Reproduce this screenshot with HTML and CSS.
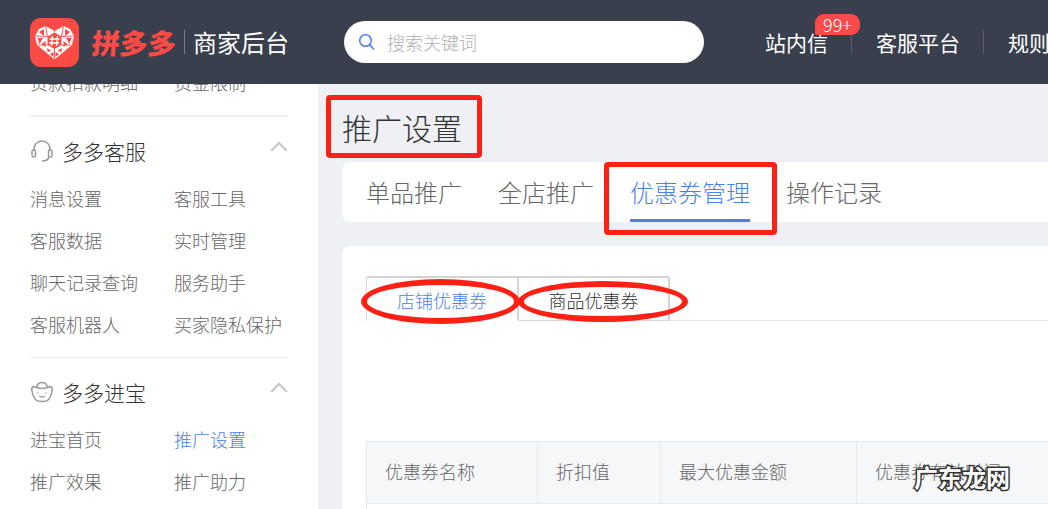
FILE: index.html
```html
<!DOCTYPE html>
<html lang="zh-CN">
<head>
  <meta charset="UTF-8" />
  <title>推广设置</title>
  <link rel="stylesheet" href="styles.css">
</head>
<body>

  <!-- Top bar -->
  <header class="topbar">
    <div class="logo">
      <svg class="logo-mark" width="49" height="49" viewBox="0 0 49 49">
        <rect width="49" height="49" rx="11" fill="#fc4a45"/>
        <path d="M24.500 41.500 L7 27 L5 18 L9 11 L15.500 8 L24.500 13 L33.500 8 L40 11 L44 18 L42 27 Z" fill="#fff"/>
        <path d="M24.500 14.500 L31.500 18.500 L31.500 27 L24.500 31 L17.500 27 L17.500 18.500 Z" fill="#fc4a45"/>
        <path d="M22.500 18 L21.500 28 M27.500 18 L26.500 28 M19.500 21 L29.500 21 M19 25 L29 25" stroke="#fff" stroke-width="1.400"/>
        <g fill="#fc4a45">
          <path d="M9 14 L14 11 L14 18 Z"/>
          <path d="M40 14 L35 11 L35 18 Z"/>
          <path d="M7.500 20 L13 20 L9.500 26 Z"/>
          <path d="M41.500 20 L36 20 L39.500 26 Z"/>
          <path d="M15.500 23 L11.500 26 L15.500 29 Z"/>
          <path d="M33.500 23 L37.500 26 L33.500 29 Z"/>
          <path d="M17 30 L21.500 33 L17.500 34 Z"/>
          <path d="M32 30 L27.500 33 L31.500 34 Z"/>
          <path d="M23.500 34 L23.500 39 L20 36 Z"/>
          <path d="M25.500 34 L25.500 39 L29 36 Z"/>
        </g>
        <path d="M5.500 18 L17.500 18.500 M31.500 18.500 L43.500 18 M15.500 8 L17.500 18.500 M33.500 8 L31.500 18.500 M24.500 13 L24.500 14.500 M17.500 27 L8 27 M31.500 27 L41 27 M24.500 31 L24.500 41" stroke="#fc4a45" stroke-width="0.900"/>
      </svg>
      <span class="logo-name">拼多多</span>
      <span class="logo-title">商家后台</span>
    </div>
    <div class="search">
      <svg width="18" height="18" viewBox="0 0 18 18" fill="none" stroke="#4a7ff0" stroke-width="1.500">
        <circle cx="7.500" cy="7.500" r="5.800"/>
        <path d="M11.800 11.800 L16 16.500"/>
      </svg>
      <span>搜索关键词</span>
    </div>
    <nav class="topnav">
      <a class="topnav-item has-badge">站内信<span class="badge">99+</span></a>
      <a class="topnav-item">客服平台</a>
      <a class="topnav-item">规则</a>
    </nav>
  </header>

  <div class="page">
    <!-- Left menu -->
    <aside class="sidebar">
      <div class="menu-items clipped">
        <a>货款扣款明细</a><a>资金限制</a>
      </div>

      <section class="menu-group first">
        <h3>
          <svg width="24" height="24" viewBox="0 0 24 24" fill="none" stroke="#9a9a9a" stroke-width="1.500">
            <path d="M4 12 V10 a8 8 0 0 1 16 0 V12"/>
            <rect x="2" y="11" width="3.500" height="7" rx="1.500"/>
            <rect x="18.500" y="11" width="3.500" height="7" rx="1.500"/>
            <path d="M19 18 Q18 22 12 22"/>
          </svg>
          <span>多多客服</span>
          <i class="chevron"></i>
        </h3>
        <div class="menu-items">
          <a>消息设置</a><a>客服工具</a>
          <a>客服数据</a><a>实时管理</a>
          <a>聊天记录查询</a><a>服务助手</a>
          <a>客服机器人</a><a>买家隐私保护</a>
        </div>
      </section>

      <section class="menu-group last">
        <h3>
          <svg width="24" height="24" viewBox="0 0 24 24" fill="none" stroke="#9a9a9a" stroke-width="1.500">
            <path d="M6.500 8 Q7 2.500 12 2.500 Q17 2.500 17.500 8"/>
            <path d="M3.500 6.500 Q12 10.500 20.500 6.500 Q23 7.500 22 11 Q21 17 18 20 Q16.500 21.500 12 21.500 Q7.500 21.500 6 20 Q3 17 2 11 Q1 7.500 3.500 6.500 Z"/>
            <path d="M8 12.500 V13.500 M16 12.500 V13.500 M9 16 Q12 18 15 16"/>
          </svg>
          <span>多多进宝</span>
          <i class="chevron"></i>
        </h3>
        <div class="menu-items">
          <a>进宝首页</a><a class="active">推广设置</a>
          <a>推广效果</a><a>推广助力</a>
        </div>
      </section>
    </aside>

    <!-- Main content -->
    <main class="content">
      <h1 class="page-title">推广设置</h1>

      <div class="tabs">
        <a>单品推广</a>
        <a>全店推广</a>
        <a class="active">优惠券管理</a>
        <a>操作记录</a>
      </div>

      <div class="card">
        <div class="subtabs">
          <a class="active">店铺优惠券</a>
          <a>商品优惠券</a>
        </div>

        <table class="coupon-table">
          <tr>
            <th class="col-name">优惠券名称</th>
            <th class="col-rate">折扣值</th>
            <th class="col-max">最大优惠金额</th>
            <th>优惠券有效时间</th>
          </tr>
          <tr><td colspan="4"></td></tr>
        </table>
      </div>
    </main>
  </div>

  <!-- Red marks drawn over the screenshot -->
  <div class="mark mark-title"></div>
  <div class="mark mark-tab"></div>
  <div class="mark mark-oval-a"></div>
  <div class="mark mark-oval-b"></div>
  <div class="watermark">广东龙网</div>

</body>
</html>
```

FILE: styles.css
```css
* {
  box-sizing: border-box;
}

html, body {
  margin: 0;
  height: 509px;
  overflow: hidden;
}

body {
  position: relative;
  font-family: "Noto Sans CJK SC", "Liberation Sans", sans-serif;
  font-weight: 300;
  background: #eef0f4;
  color: #333;
}

/* Top bar */
.topbar {
  position: relative;
  z-index: 2;
  display: flex;
  align-items: center;
  height: 84px;
  padding-left: 30px;
  background: #3a3f4e;
  white-space: nowrap;
  overflow: hidden;
}

.logo {
  flex: none;
  display: flex;
  align-items: center;
  width: 314px;
}

.logo-name {
  margin-left: 13px;
  padding-right: 8px;
  font-size: 28px;
  line-height: 32px;
  font-weight: 900;
  color: #fc4a45;
  transform: skewX(-6deg);
}

.logo-title {
  padding-left: 8px;
  font-size: 24px;
  line-height: 24px;
  font-weight: 400;
  color: #fff;
  border-left: 1px solid #7b7f8a;
}

.search {
  flex: none;
  display: flex;
  align-items: center;
  gap: 11px;
  width: 360px;
  height: 42px;
  padding-left: 14px;
  border-radius: 21px;
  background: #fff;
  font-size: 18px;
  color: #b0b0b0;
}

.topnav {
  flex: none;
  display: flex;
  height: 84px;
  align-items: center;
  margin-left: 61px;
}

.topnav-item {
  position: relative;
  padding-right: 23px;
  margin-right: 24px;
  font-size: 21px;
  line-height: 24px;
  font-weight: 400;
  color: #fff;
  border-right: 1px solid #5c606d;
}

.badge {
  position: absolute;
  left: 50px;
  top: -16px;
  width: 45px;
  height: 21px;
  border-radius: 9px 9px 9px 2px;
  background: #fc4a4a;
  font-size: 18px;
  font-weight: 300;
  line-height: 21px;
  text-align: center;
}

/* Layout below the bar */
.page {
  display: flex;
  height: 425px;
}

.sidebar {
  flex: none;
  width: 318px;
  padding: 0 30px;
  background: #fff;
  overflow: hidden;
}

.menu-items {
  display: grid;
  grid-template-columns: 144px 1fr;
  grid-auto-rows: 42px;
  align-items: center;
  font-size: 18px;
  color: #666;
  white-space: nowrap;
}

.menu-items.clipped {
  margin-top: -23px;
  padding-bottom: 12px;
}

.menu-items .active {
  color: #4a7ff0;
}

.menu-group {
  padding-top: 14px;
  border-top: 2px solid #eeeff1;
  padding-bottom: 12px;
}

.menu-group.last {
  border-top-width: 1px;
}

.menu-group h3 {
  display: flex;
  align-items: center;
  margin: 0 0 6px;
  height: 40px;
  font-size: 21px;
  font-weight: 300;
  color: #333;
}

.menu-group h3 span {
  margin-left: 8px;
}

.chevron {
  margin: -2px 3px 0 auto;
  width: 12px;
  height: 12px;
  border-top: 2px solid #c4c6c8;
  border-left: 2px solid #c4c6c8;
  transform: rotate(45deg);
}

/* Main area */
.content {
  flex: 1;
  min-width: 0;
  padding-left: 24px;
}

.page-title {
  margin: 0;
  height: 78px;
  font-size: 30px;
  line-height: 87px;
  font-weight: 300;
  color: #333;
}

.tabs {
  display: flex;
  gap: 36px;
  height: 60px;
  padding-left: 24px;
  background: #fff;
  border-radius: 8px 0 0 8px;
  font-size: 24px;
  color: #666;
}

.tabs a {
  line-height: 60px;
}

.tabs .active {
  color: #4a7ff0;
  border-bottom: 3px solid #4a7ff0;
}

.card {
  height: 263px;
  margin-top: 24px;
  padding: 30px 0 0 24px;
  background: #fff;
  border-radius: 8px 0 0 0;
}

.subtabs {
  display: flex;
  height: 45px;
  border-bottom: 1px solid #e8e8e8;
  font-size: 18px;
  color: #333;
}

.subtabs a {
  width: 151px;
  height: 45px;
  line-height: 45px;
  text-align: center;
  border: 1px solid #d4d4d4;
  border-top-width: 2px;
  border-right-width: 2px;
  border-left-width: 0;
}

.subtabs .active {
  width: 153px;
  color: #4a7ff0;
  border-left-width: 1px;
  border-bottom-color: #fff;
  border-radius: 3px 0 0 0;
}

.subtabs a:last-child {
  border-radius: 0 3px 0 0;
}

.coupon-table {
  margin-top: 120px;
  width: 800px;
  border-collapse: collapse;
  table-layout: fixed;
  font-size: 18px;
  color: #666;
}

.coupon-table th {
  height: 62px;
  padding: 0 0 4px 18px;
  text-align: left;
  font-weight: 300;
  background: #f6f7f9;
  border: 1px solid #e8e9ec;
  white-space: nowrap;
}

.coupon-table td {
  height: 40px;
  border: 1px solid #e8e9ec;
}

.col-name {
  width: 171px;
}

.col-rate {
  width: 123px;
}

.col-max {
  width: 196px;
}

/* Annotations on top of the screenshot */
.mark {
  position: absolute;
  border: 5px solid #fd2015;
}

.mark-title {
  left: 326px;
  top: 95px;
  width: 156px;
  height: 63px;
  border-radius: 4px;
}

.mark-tab {
  left: 604px;
  top: 162px;
  width: 173px;
  height: 73px;
  border-radius: 4px;
}

.mark-oval-a {
  left: 361px;
  top: 279px;
  width: 159px;
  height: 45px;
  border-width: 6px;
  border-radius: 50%;
}

.mark-oval-b {
  left: 518px;
  top: 281px;
  width: 170px;
  height: 41px;
  border-width: 6px;
  border-radius: 50%;
}

.watermark {
  position: absolute;
  left: 914px;
  top: 461px;
  font-size: 24px;
  line-height: 32px;
  font-weight: 700;
  color: #fff;
  -webkit-text-stroke: 3px #333;
  paint-order: stroke fill;
  white-space: nowrap;
}
```
